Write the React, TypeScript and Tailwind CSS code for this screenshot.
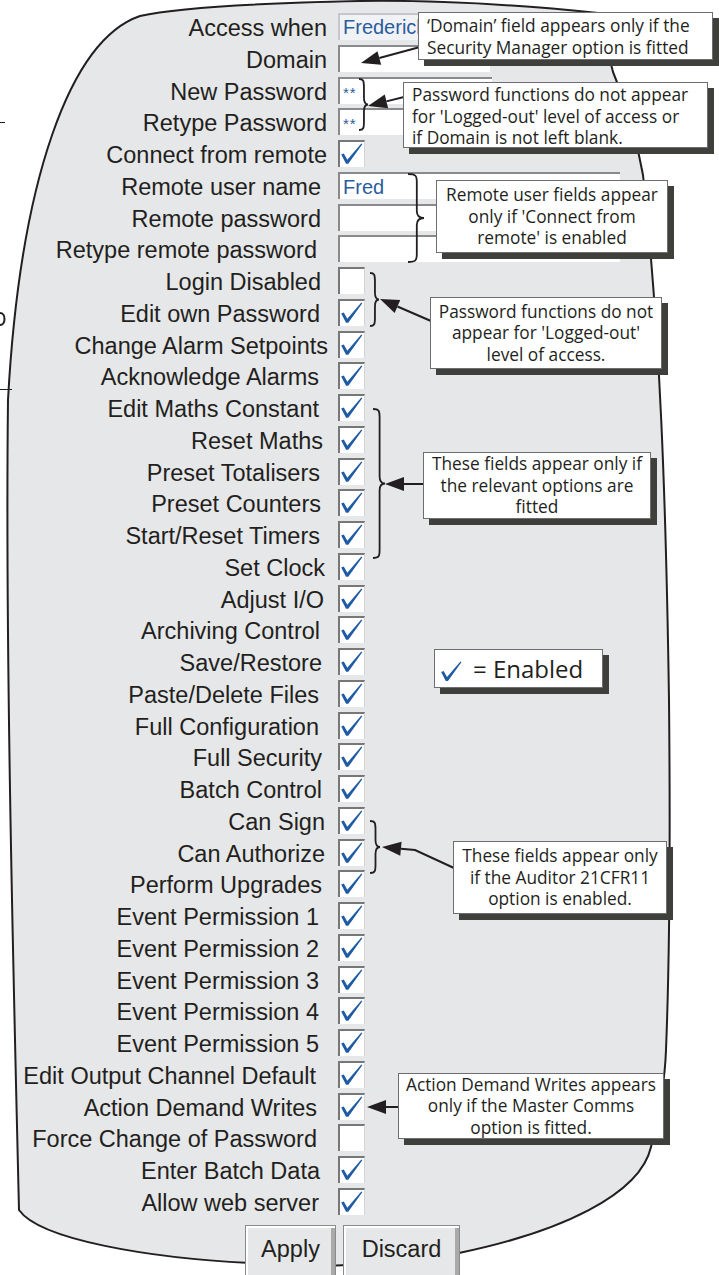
import React from "react";

const INK = "#231f20";
const BLUE = "#1f5ba3";

type Row = {
  label: string;
  pr: string;
  kind?: "select" | "text" | "pw" | "on" | "off";
  w?: string;
  value?: string;
};

const rows: Row[] = [
  { label: "Access when", pr: "pr-[1px]", kind: "select", value: "Frederick" },
  { label: "Domain", pr: "pr-[1px]", kind: "text", w: "w-[152px]" },
  { label: "New Password", pr: "pr-[1px]", kind: "pw" },
  { label: "Retype Password", pr: "pr-[1px]", kind: "pw" },
  { label: "Connect from remote", pr: "pr-[1px]" },
  { label: "Remote user name", pr: "pr-[7px]", kind: "text", w: "w-[282px]", value: "Fred" },
  { label: "Remote password", pr: "pr-[7px]", kind: "text", w: "w-[282px]" },
  { label: "Retype remote password", pr: "pr-[11px]", kind: "text", w: "w-[282px]" },
  { label: "Login Disabled", pr: "pr-[7px]", kind: "off" },
  { label: "Edit own Password", pr: "pr-[8px]" },
  { label: "Change Alarm Setpoints", pr: "pr-0" },
  { label: "Acknowledge Alarms", pr: "pr-[9px]" },
  { label: "Edit Maths Constant", pr: "pr-[9px]" },
  { label: "Reset Maths", pr: "pr-[5px]" },
  { label: "Preset Totalisers", pr: "pr-[8px]" },
  { label: "Preset Counters", pr: "pr-[7px]" },
  { label: "Start/Reset Timers", pr: "pr-[8px]" },
  { label: "Set Clock", pr: "pr-[3px]" },
  { label: "Adjust I/O", pr: "pr-[4px]" },
  { label: "Archiving Control", pr: "pr-[8px]" },
  { label: "Save/Restore", pr: "pr-[6px]" },
  { label: "Paste/Delete Files", pr: "pr-[9px]" },
  { label: "Full Configuration", pr: "pr-[9px]" },
  { label: "Full Security", pr: "pr-[6px]" },
  { label: "Batch Control", pr: "pr-[6px]" },
  { label: "Can Sign", pr: "pr-[3px]" },
  { label: "Can Authorize", pr: "pr-[3px]" },
  { label: "Perform Upgrades", pr: "pr-[6px]" },
  { label: "Event Permission 1", pr: "pr-[9px]" },
  { label: "Event Permission 2", pr: "pr-[9px]" },
  { label: "Event Permission 3", pr: "pr-[9px]" },
  { label: "Event Permission 4", pr: "pr-[9px]" },
  { label: "Event Permission 5", pr: "pr-[9px]" },
  { label: "Edit Output Channel Default", pr: "pr-[12px]" },
  { label: "Action Demand Writes", pr: "pr-[11px]" },
  { label: "Force Change of Password", pr: "pr-[11px]", kind: "off" },
  { label: "Enter Batch Data", pr: "pr-[8px]" },
  { label: "Allow web server", pr: "pr-[9px]" },
];

const Tick = ({ className }: { className: string }) => (
  <svg viewBox="2 2 25 25" className={className}>
    <path d="M3.2 14.6 L5.8 13.4 L9.3 19.8 L23.3 3.5 L24.3 4.3 L10.3 23.8 L8 23.8 Z" fill={BLUE} />
  </svg>
);

const Control = ({ row }: { row: Row }) => {
  const kind = row.kind ?? "on";
  if (kind === "select") {
    return (
      <div className="w-[262px] h-[27px] bg-[#f0f2f5] border-t-2 border-l-2 border-[#c4c6c9] pl-[3px] text-[20px] leading-[25px] text-[#2b5c9c]">
        {row.value}
      </div>
    );
  }
  if (kind === "text") {
    return (
      <div className={`${row.w} h-[27px] bg-white border-t-2 border-l-2 border-[#8a8a8a] pl-[3px] pt-[1px] text-[20px] leading-[25px] text-[#2b5c9c]`}>
        {row.value}
      </div>
    );
  }
  if (kind === "pw") {
    return (
      <div className="w-[154px] h-[27px] bg-white border-t-2 border-l-2 border-[#8a8a8a] pl-[3px] pt-[6px] text-[15px] leading-[15px] tracking-[1px] text-[#2b5c9c]">
        **
      </div>
    );
  }
  return (
    <div className="w-[27px] h-[27px] bg-white border-t-2 border-l-2 border-[#777777] border-r border-r-[#d4d4d4]">
      {kind === "on" && <Tick className="w-[25px] h-[25px]" />}
    </div>
  );
};

function brace(x: number, y0: number, y1: number, w: number) {
  const ym = (y0 + y1) / 2;
  const m = x + w * 0.55;
  return `M ${x} ${y0} C ${x + w * 0.5} ${y0}, ${m} ${y0 + 2}, ${m} ${y0 + 8} L ${m} ${ym - 7} C ${m} ${ym - 2}, ${x + w * 0.75} ${ym}, ${x + w} ${ym} C ${x + w * 0.75} ${ym}, ${m} ${ym + 2}, ${m} ${ym + 7} L ${m} ${y1 - 8} C ${m} ${y1 - 2}, ${x + w * 0.5} ${y1}, ${x} ${y1}`;
}

function Arrow({ pts }: { pts: [number, number][] }) {
  const [tx, ty] = pts[pts.length - 1];
  const [fx, fy] = pts[pts.length - 2];
  const len = Math.hypot(tx - fx, ty - fy);
  const dx = (tx - fx) / len;
  const dy = (ty - fy) / len;
  const L = 19;
  const hw = 7;
  const bx = tx - dx * L;
  const by = ty - dy * L;
  const line = pts.slice(0, -1).map(([x, y]) => `${x},${y}`).join(" ") + ` ${bx},${by}`;
  return (
    <g>
      <polyline points={line} fill="none" stroke={INK} strokeWidth={2} />
      <polygon points={`${tx},${ty} ${bx - dy * hw},${by + dx * hw} ${bx + dy * hw},${by - dx * hw}`} fill={INK} />
    </g>
  );
}

const Callout = ({ className, children }: { className: string; children: React.ReactNode }) => (
  <div
    className={`absolute z-20 bg-white border border-[#6d6e71] shadow-[6px_6px_0_0_#3f403b] font-['Open_Sans',sans-serif] text-[17.3px] leading-[21.5px] text-[#231f20] whitespace-nowrap ${className}`}
  >
    {children}
  </div>
);

const panelPath =
  "M 360 1 C 260 3, 175 8, 140 16 C 70 40, 20 180, 8 400 C 5 650, 14 1000, 19 1210 C 40 1240, 150 1258, 250 1263 Q 345 1272, 459 1253 C 560 1232, 640 1195, 651 1147 C 660 1110, 665 1080, 666 1050 C 670 950, 670 800, 669 700 C 666 500, 660 330, 643 175 C 635 130, 625 100, 613 72 L 598 13 C 520 5, 430 0, 360 1 Z";

export default function App() {
  return (
    <div className="relative w-[719px] h-[1275px] overflow-hidden bg-white font-['Liberation_Sans',Arial,sans-serif] text-[#231f20]">
      <svg className="absolute inset-0 w-[719px] h-[1275px]" viewBox="0 0 719 1275">
        <path d={panelPath} fill="#e6e7e8" stroke={INK} strokeWidth={2} />
        {/* fragments of the neighbouring figure */}
        <line x1="0" y1="122.5" x2="5" y2="122.5" stroke={INK} strokeWidth={1} />
        <path d="M 0 313 C 3 313, 4.5 316, 4.5 319 C 4.5 322, 3 325, 0 325" fill="none" stroke={INK} strokeWidth={2} />
        <line x1="0" y1="389.5" x2="12" y2="389.5" stroke={INK} strokeWidth={1} />
      </svg>

      <div className="relative z-10 flex flex-col pt-[13px]">
        {rows.map((row) => (
          <div key={row.label} className="flex h-[31.75px] items-start">
            <div className={`w-[328px] shrink-0 text-right text-[23.5px] leading-[27px] pt-[2px] whitespace-nowrap ${row.pr}`}>
              {row.label}
            </div>
            <div className="ml-[10px]">
              <Control row={row} />
            </div>
          </div>
        ))}

        <div className="flex gap-[7px] pl-[245px] mt-[5px]">
          <button className="w-[91px] h-[60px] flex items-start justify-center pt-[10px] bg-[#e6e7e8] border border-[#8a8a8a] shadow-[inset_2px_2px_0_#ffffff,inset_-4px_0_0_#a9a9a9] text-[23.5px] leading-[27px] text-[#231f20]">
            Apply
          </button>
          <button className="w-[117px] h-[60px] flex items-start justify-center pt-[10px] bg-[#e6e7e8] border border-[#8a8a8a] shadow-[inset_2px_2px_0_#ffffff,inset_-4px_0_0_#a9a9a9] text-[23.5px] leading-[27px] text-[#231f20]">
            Discard
          </button>
        </div>
      </div>

      <svg className="absolute inset-0 z-10 w-[719px] h-[1275px] pointer-events-none" viewBox="0 0 719 1275">
        <g fill="none" stroke={INK} strokeWidth={1.8}>
          <path d={brace(359, 79, 130, 9)} />
          <path d={brace(408, 174, 262, 16)} />
          <path d={brace(370, 273, 326, 9)} />
          <path d={brace(373, 409, 558, 12)} />
          <path d={brace(370, 821, 873, 10)} />
        </g>
        <Arrow pts={[[420, 47], [361, 63]]} />
        <Arrow pts={[[404, 97], [368, 106]]} />
        <Arrow pts={[[431, 321], [380, 299]]} />
        <Arrow pts={[[424, 484], [385, 484]]} />
        <Arrow pts={[[454, 868], [415, 850], [382, 847]]} />
        <Arrow pts={[[399, 1107], [367, 1107]]} />
      </svg>

      <Callout className="left-[418px] top-[12px] w-[295px] h-[48px] pl-[8px] pt-[2px]">
        <div>‘Domain’ field appears only if the</div>
        <div>Security Manager option is fitted</div>
      </Callout>
      <Callout className="left-[403px] top-[82px] w-[305px] h-[66px] pl-[8px] pt-[1px]">
        <div>Password functions do not appear</div>
        <div>for 'Logged-out' level of access or</div>
        <div>if Domain is not left blank.</div>
      </Callout>
      <Callout className="left-[436px] top-[180px] w-[232px] h-[73px] flex flex-col items-center justify-center">
        <div>Remote user fields appear</div>
        <div>only if 'Connect from</div>
        <div>remote' is enabled</div>
      </Callout>
      <Callout className="left-[430px] top-[297px] w-[232px] h-[72px] flex flex-col items-center justify-center">
        <div>Password functions do not</div>
        <div>appear for 'Logged-out'</div>
        <div>level of access.</div>
      </Callout>
      <Callout className="left-[423px] top-[452px] w-[228px] h-[67px] flex flex-col items-center justify-center">
        <div>These fields appear only if</div>
        <div>the relevant options are</div>
        <div>fitted</div>
      </Callout>
      <Callout className="left-[434px] top-[649px] w-[169px] h-[39px] flex items-center pl-[5px]">
        <Tick className="w-[24px] h-[24px] mt-[6px]" />
        <span className="ml-[9px] text-[24px] leading-[28px]">= Enabled</span>
      </Callout>
      <Callout className="left-[453px] top-[841px] w-[214px] h-[73px] flex flex-col items-center justify-center">
        <div>These fields appear only</div>
        <div>if the Auditor 21CFR11</div>
        <div>option is enabled.</div>
      </Callout>
      <Callout className="left-[398px] top-[1073px] w-[266px] h-[66px] flex flex-col items-center justify-center">
        <div>Action Demand Writes appears</div>
        <div>only if the Master Comms</div>
        <div>option is fitted.</div>
      </Callout>
    </div>
  );
}
